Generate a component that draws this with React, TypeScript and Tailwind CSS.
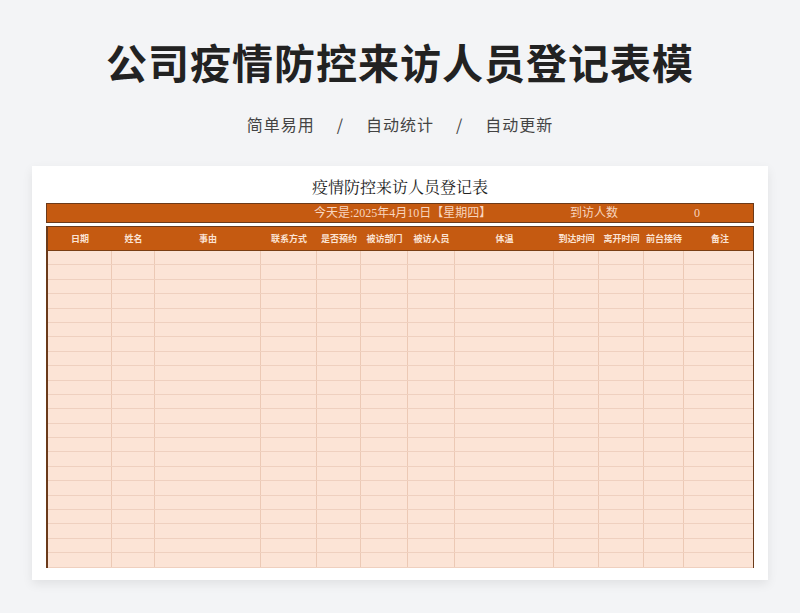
const cols = [64, 43, 106, 56, 44, 47, 47, 99, 45, 45, 40, 72];
const heads = ["日期","姓名","事由","联系方式","是否预约","被访部门","被访人员","体温","到达时间","离开时间","前台接待","备注"];
export default function App() {
  const rows = Array.from({ length: 22 });
  return (
    <div className="w-[800px] h-[613px] bg-[#f3f4f6] flex flex-col items-center" style={{ fontFamily: '"Noto Sans CJK SC", sans-serif' }}>
      <div className="mt-[32px] h-[58px] text-[41px] font-bold text-[#222] leading-[58px] tracking-[1px]">公司疫情防控来访人员登记表模</div>
      <div className="mt-[22px] text-[16px] text-[#444] flex gap-[22px] leading-[24px] tracking-[1px]">
        <span>简单易用</span><span>/</span><span>自动统计</span><span>/</span><span>自动更新</span>
      </div>
      <div className="mt-[30px] w-[736px] h-[414px] bg-white shadow-[0_4px_10px_rgba(0,0,0,0.08)] flex flex-col px-[14px]">
        <div className="h-[37px] flex items-center justify-center text-[16px] text-[#222] pt-[5px]" style={{ fontFamily: '"Noto Serif CJK SC","Noto Sans CJK SC", serif' }}>疫情防控来访人员登记表</div>
        <div className="h-[20px] bg-[#c55a11] border border-[#6b3a1a] flex items-center text-[12px] text-[#f8d5bf]" style={{ fontFamily: '"Liberation Serif","Noto Sans CJK SC", serif' }}>
          <span className="ml-[267px] w-[256px]">今天是:2025年4月10日【星期四】</span>
          <span className="w-[124px]">到访人数</span>
          <span>0</span>
        </div>
        <div className="mt-[3px] border-l-2 border-r border-t border-[#6b3a1a] flex flex-col">
          <div className="h-[24px] bg-[#c55a11] flex border-b border-[#7a3f14]">
            {heads.map((h, i) => (
              <div key={i} className="flex items-center justify-center text-[9px] font-bold text-[#fbe3d4] shrink-0" style={{ width: cols[i] }}>{h}</div>
            ))}
          </div>
          {rows.map((_, r) => (
            <div key={r} className="h-[14.4px] bg-[#fce4d6] flex border-b border-[#efd0bf]">
              {cols.map((w, i) => (
                <div key={i} className="shrink-0 border-r border-[#ecc9b5] last:border-r-0" style={{ width: w }} />
              ))}
            </div>
          ))}
        </div>
      </div>
    </div>
  );
}
